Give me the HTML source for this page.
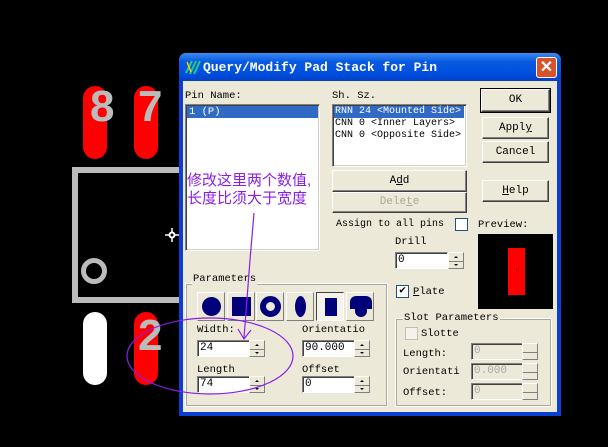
<!DOCTYPE html>
<html><head><meta charset="utf-8"><style>
*{margin:0;padding:0;box-sizing:border-box}
body{width:608px;height:447px;background:#000;position:relative;overflow:hidden;font-family:"Liberation Mono",monospace;font-size:10px;color:#000}
.a{position:absolute}
.pad{position:absolute;width:24px;height:73px;border-radius:12px;background:#f00}
.num{position:absolute;color:#bbb;font:bold 44px "Liberation Sans",sans-serif;line-height:44px}
.t{position:absolute;font-size:10.5px;line-height:12px;white-space:nowrap}
.sunk{position:absolute;background:#fff;border:1px solid;border-color:#808080 #fff #fff #808080;box-shadow:inset 1px 1px 0 #404040,inset -1px -1px 0 #d4d0c8}
.btn{position:absolute;background:#ece9d8;border:1px solid;border-color:#fff #404040 #404040 #fff;box-shadow:inset -1px -1px 0 #808080;text-align:center;font-size:11px}
.grp{position:absolute;border:1px solid #fff;outline:1px solid #aca899;outline-offset:-2px}
.spin{position:absolute;width:16px;background:#ece9d8;border:1px solid;border-color:#fff #808080 #808080 #fff}
.spin:before{content:"";position:absolute;left:0;right:0;top:50%;border-top:1px solid #808080}
.spin i{position:absolute;left:5px;width:0;height:0;border-left:2px solid transparent;border-right:2px solid transparent}
.in{position:absolute;background:#fff;border:1px solid;border-color:#808080 #fff #fff #808080;box-shadow:inset 1px 1px 0 #404040;font-size:11px;line-height:14px;padding-left:2px}
.dis{background:#ece9d8;color:#aaa}
.sb{position:absolute;top:292px;width:28px;height:29px;background:#ece9d8;border:1px solid;border-color:#fff #808080 #808080 #fff}
.sb b{position:absolute;background:#00007a}
</style></head><body>
<div class="pad" style="left:83px;top:86px"></div>
<div class="pad" style="left:134px;top:86px"></div>
<div class="pad" style="left:83px;top:312px;background:#fff"></div>
<div class="pad" style="left:134px;top:312px"></div>
<div class="num" style="left:90px;top:85px">8</div>
<div class="num" style="left:138px;top:85px">7</div>
<div class="num" style="left:138px;top:314px">2</div>
<div class="a" style="left:72px;top:167px;width:120px;height:136px;border:6px solid #bbb"></div>
<div class="a" style="left:81px;top:258px;width:26px;height:26px;border:5px solid #bbb;border-radius:50%"></div>
<svg class="a" style="left:164px;top:227px" width="16" height="16"><path d="M8 1V15M1 8H15" stroke="#fff" stroke-width="1.5"/><circle cx="8" cy="8" r="3.5" fill="#fff"/><circle cx="8" cy="8" r="1.5" fill="#000"/></svg>
<div class="a" style="left:179px;top:53px;width:382px;height:363px;background:#0a3fd4;border-radius:7px 7px 0 0"></div>
<div class="a" style="left:179px;top:53px;width:382px;height:28px;background:linear-gradient(#3a8cf4,#0a5ae0 30%,#0050e0 70%,#0040c8);border-radius:7px 7px 0 0"></div>
<div class="a" style="left:183px;top:81px;width:374px;height:331px;background:#ece9d8"></div>
<svg class="a" style="left:184px;top:58px" width="18" height="18"><path d="M2 15L8 3M6 16L12 3M10 16L16 3" stroke="#2c8" stroke-width="2"/><path d="M3 4L7 14" stroke="#fc0" stroke-width="1.5"/></svg>
<div class="t" style="left:203px;top:60px;color:#fff;font-weight:bold;font-size:13px;line-height:16px">Query/Modify Pad Stack for Pin</div>
<div class="a" style="left:536px;top:57px;width:21px;height:21px;background:#d9532a;border:1px solid #fff;border-radius:3px;color:#fff;font:bold 16px/19px 'Liberation Sans',sans-serif;text-align:center">✕</div>

<div class="t" style="left:185px;top:90px">Pin Name:</div>
<div class="sunk" style="left:185px;top:104px;width:135px;height:147px"></div>
<div class="a" style="left:187px;top:106px;width:131px;height:12px;background:#316ac5"></div>
<div class="t" style="left:189px;top:106px;color:#fff">1 (P)</div>
<div class="t" style="left:332px;top:90px">Sh. Sz.</div>
<div class="sunk" style="left:332px;top:104px;width:135px;height:63px"></div>
<div class="a" style="left:334px;top:106px;width:130px;height:12px;background:#316ac5"></div>
<div class="t" style="left:335px;top:106px;color:#fff;font-size:10px">RNN 24 &lt;Mounted Side&gt;</div>
<div class="t" style="left:335px;top:118px;font-size:10px">CNN 0 &lt;Inner Layers&gt;</div>
<div class="t" style="left:335px;top:130px;font-size:10px">CNN 0 &lt;Opposite Side&gt;</div>
<div class="btn" style="left:332px;top:170px;width:135px;height:22px;line-height:20px">A<u>d</u>d</div>
<div class="btn" style="left:332px;top:192px;width:135px;height:21px;line-height:19px;color:#aca899">Dele<u>t</u>e</div>
<div class="btn" style="left:481px;top:89px;width:69px;height:23px;line-height:20px;outline:1px solid #000">OK</div>
<div class="btn" style="left:482px;top:117px;width:67px;height:22px;line-height:20px">Appl<u>y</u></div>
<div class="btn" style="left:482px;top:141px;width:67px;height:22px;line-height:20px">Cancel</div>
<div class="btn" style="left:482px;top:180px;width:67px;height:22px;line-height:20px"><u>H</u>elp</div>
<div class="t" style="left:336px;top:219px;font-size:10px">Assign to all pins</div>
<div class="a" style="left:455px;top:218px;width:13px;height:13px;background:#fff;border:1px solid #1c5180"></div>
<div class="t" style="left:478px;top:219px">Preview:</div>
<div class="a" style="left:478px;top:234px;width:75px;height:75px;background:#000"></div>
<div class="a" style="left:508px;top:248px;width:17px;height:47px;background:#f00;color:#a00;font-size:10px;text-align:center;line-height:47px">+</div>
<div class="t" style="left:395px;top:236px">Drill</div>
<div class="in" style="left:395px;top:252px;width:53px;height:17px">0</div>
<div class="spin" style="left:448px;top:252px;height:17px"><i style="top:3px;border-bottom:2px solid #000"></i><i style="top:11px;border-top:2px solid #000"></i></div>

<div class="grp" style="left:185px;top:283px;width:203px;height:124px"></div>
<div class="t" style="left:192px;top:273px;background:#ece9d8;padding:0 1px">Parameters</div>
<div class="sb" style="left:197px"><b style="left:4px;top:4px;width:19px;height:19px;border-radius:50%"></b></div>
<div class="sb" style="left:227px"><b style="left:4px;top:4px;width:19px;height:19px"></b></div>
<div class="sb" style="left:256px"><b style="left:3px;top:3px;width:21px;height:21px;border-radius:50%;background:none;border:6px solid #00007a"></b></div>
<div class="sb" style="left:286px"><b style="left:8px;top:3px;width:11px;height:21px;border-radius:50%"></b></div>
<div class="sb" style="left:316px;border-color:#404040 #fff #fff #404040;background:#f4f2ea"><b style="left:8px;top:5px;width:12px;height:18px"></b></div>
<div class="sb" style="left:346px"><b style="left:3px;top:3px;width:22px;height:13px;border-radius:6px 6px 0 0"></b><b style="left:8px;top:14px;width:12px;height:10px;border-radius:0 0 6px 6px"></b></div>
<div class="t" style="left:197px;top:324px">Width:</div>
<div class="in" style="left:197px;top:340px;width:53px;height:17px">24</div>
<div class="spin" style="left:249px;top:340px;height:17px"><i style="top:3px;border-bottom:2px solid #000"></i><i style="top:11px;border-top:2px solid #000"></i></div>
<div class="t" style="left:197px;top:364px">Length</div>
<div class="in" style="left:197px;top:376px;width:53px;height:17px">74</div>
<div class="spin" style="left:249px;top:376px;height:17px"><i style="top:3px;border-bottom:2px solid #000"></i><i style="top:11px;border-top:2px solid #000"></i></div>
<div class="t" style="left:302px;top:324px">Orientatio</div>
<div class="in" style="left:302px;top:340px;width:53px;height:17px">90.000</div>
<div class="spin" style="left:354px;top:340px;height:17px"><i style="top:3px;border-bottom:2px solid #000"></i><i style="top:11px;border-top:2px solid #000"></i></div>
<div class="t" style="left:302px;top:364px">Offset</div>
<div class="in" style="left:302px;top:376px;width:53px;height:17px">0</div>
<div class="spin" style="left:354px;top:376px;height:17px"><i style="top:3px;border-bottom:2px solid #000"></i><i style="top:11px;border-top:2px solid #000"></i></div>

<div class="a" style="left:396px;top:285px;width:13px;height:13px;background:#fff;border:1px solid #1c5180;font-size:11px;line-height:11px;text-align:center;font-weight:bold">✔</div>
<div class="t" style="left:413px;top:286px"><u>P</u>late</div>
<div class="grp" style="left:395px;top:318px;width:157px;height:89px"></div>
<div class="t" style="left:403px;top:312px;background:#ece9d8;padding:0 1px">Slot Parameters</div>
<div class="a" style="left:405px;top:327px;width:13px;height:13px;background:#f4f2ea;border:1px solid #c0c0b0"></div>
<div class="t" style="left:421px;top:328px">Slotte</div>
<div class="t" style="left:403px;top:348px">Length:</div>
<div class="in dis" style="left:471px;top:343px;width:52px;height:17px">0</div>
<div class="spin" style="left:522px;top:343px;height:17px"></div>
<div class="t" style="left:403px;top:366px">Orientati</div>
<div class="in dis" style="left:471px;top:363px;width:52px;height:17px">0.000</div>
<div class="spin" style="left:522px;top:363px;height:17px"></div>
<div class="t" style="left:403px;top:387px">Offset:</div>
<div class="in dis" style="left:471px;top:383px;width:52px;height:17px">0</div>
<div class="spin" style="left:522px;top:383px;height:17px"></div>

<div class="t" style="left:187px;top:172px;color:#8a1ee8;font:15px/18px 'Liberation Sans','Noto Sans CJK SC',sans-serif">修改这里两个数值,<br>长度比须大于宽度</div>
<svg class="a" style="left:0;top:0" width="608" height="447"><path d="M254 213 L250 260 L244 338" stroke="#8a1ee8" stroke-width="1.2" fill="none"/><path d="M238 329 L244 339 L251 330" stroke="#8a1ee8" stroke-width="1.2" fill="none"/><ellipse cx="210" cy="356" rx="83" ry="38" stroke="#8a1ee8" stroke-width="1.2" fill="none"/></svg>
</body></html>
